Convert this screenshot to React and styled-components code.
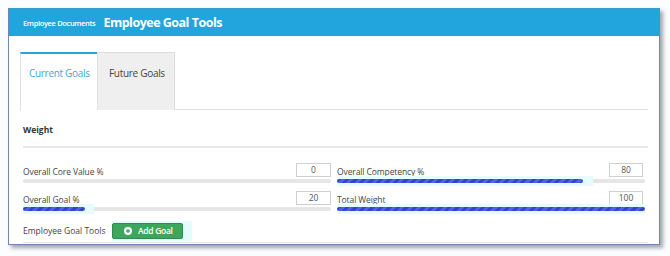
import React from "react";
import styled, { createGlobalStyle } from "styled-components";

const Global = createGlobalStyle`
  html, body { margin: 0; padding: 0; background: #ffffff; }
  body { font-family: "Open Sans", "Noto Sans", sans-serif; }
  * { box-sizing: border-box; }
`;

const Page = styled.div`
  width: 670px;
  height: 256px;
  padding: 8px 0 0 8px;
  background: #fbfdfe;
`;

const Window = styled.div`
  width: 652px;
  height: 237px;
  background: #fff;
  border: 1px solid #7484b0;
  border-top-color: #3e9cc8;
  box-shadow: 3px 3px 4px rgba(50, 55, 80, 0.45);
  display: flex;
  flex-direction: column;
`;

const Header = styled.div`
  height: 27px;
  background: #22a5dc;
  display: flex;
  align-items: center;
  padding-left: 14px;
  gap: 8px;
  color: #fff;
`;

const Crumb = styled.span`
  font-size: 7.5px;
  letter-spacing: -0.35px;
  font-weight: 600;
`;

const Title = styled.span`
  font-size: 12.5px;
  font-weight: 700;
  letter-spacing: -0.5px;
`;

const Body = styled.div`
  padding: 16px 11px 0 11px;
  display: flex;
  flex-direction: column;
`;

const TabBar = styled.div`
  display: flex;
  height: 58px;
  border-bottom: 1px solid #e2e2e2;
`;

const Tab = styled.div`
  width: ${(p) => p.$w}px;
  padding-left: ${(p) => p.$pl}px;
  font-size: 10px;
  letter-spacing: -0.3px;
  color: ${(p) => (p.$active ? "#44a6d4" : "#444")};
  background: ${(p) => (p.$active ? "#fff" : "#efefef")};
  border-top: ${(p) => (p.$active ? "2px solid #22a5dc" : "1px solid #dcdcdc")};
  border-left: 1px solid #e2e2e2;
  border-right: ${(p) => (p.$active ? "none" : "1px solid #dcdcdc")};
  margin-bottom: ${(p) => (p.$active ? "-1px" : "0")};
  height: ${(p) => (p.$active ? "59px" : "58px")};
  line-height: 14px;
  padding-top: ${(p) => (p.$active ? "12px" : "13px")};
`;

const Content = styled.div`
  margin-left: 3px;
  display: flex;
  flex-direction: column;
`;

const SectionTitle = styled.div`
  font-size: 8.5px;
  font-weight: 700;
  color: #333;
  height: 38px;
  padding-top: 14px;
  line-height: 12px;
  border-bottom: 2px solid #eaeaea;
`;

const Grid = styled.div`
  display: grid;
  grid-template-columns: 308px 308px;
  column-gap: 6px;
  padding-top: 15px;
`;

const Field = styled.div`
  display: flex;
  flex-direction: column;
  height: 28px;
`;

const FieldTop = styled.div`
  display: flex;
  justify-content: space-between;
  align-items: center;
  height: 14px;
`;

const Label = styled.span`
  font-size: 8.5px;
  color: #444;
  letter-spacing: -0.1px;
  padding-top: 3px;
`;

const ValueBox = styled.div`
  width: ${(p) => p.$w}px;
  margin-right: ${(p) => p.$mr}px;
  height: 14px;
  border: 1px solid #cfcfcf;
  font-size: 8.5px;
  color: #555;
  text-align: center;
  line-height: 12px;
  background: #fff;
`;

const Track = styled.div`
  margin-top: 2px;
  height: 4px;
  background: #e6e6e6;
  border-radius: 2px;
  position: relative;
`;

const Glow = styled.div`
  position: absolute;
  left: 0;
  top: -3px;
  height: 10px;
  background: #e6fbfd;
`;

const Fill = styled.div`
  position: absolute;
  left: 0;
  top: 0;
  height: 4px;
  border-radius: 2px;
  background: repeating-linear-gradient(
    135deg,
    #3444d2 0 3px,
    #5062e0 3px 6px
  );
`;

const ToolRow = styled.div`
  display: flex;
  align-items: center;
  height: 22px;
  margin-top: 2px;
  border-bottom: 1px solid #e6e6e6;
  padding-bottom: 2px;
`;

const ToolLabel = styled.span`
  font-size: 8.5px;
  color: #444;
  width: 89px;
`;

const ButtonGlow = styled.div`
  background: #e4fcfe;
  padding: 2px 9px 2px 0;
`;

const Button = styled.button`
  display: flex;
  align-items: center;
  gap: 6px;
  height: 16px;
  width: 71px;
  padding: 0 0 0 11px;
  background: #3ba65c;
  border: 1px solid #2f8a4b;
  border-radius: 2px;
  color: #fff;
  font-family: "Open Sans", sans-serif;
  font-size: 8.5px;
  font-weight: 600;
  letter-spacing: -0.3px;
`;

const Bar = ({ pct }) => (
  <Track>
    {pct > 0 && <Glow style={{ width: `${Math.min(100, pct + 3)}%` }} />}
    {pct > 0 && <Fill style={{ width: `${pct}%` }} />}
  </Track>
);

const fields = [
  { label: "Overall Core Value %", value: "0", pct: 0 },
  { label: "Overall Competency %", value: "80", pct: 80 },
  { label: "Overall Goal %", value: "20", pct: 20 },
  { label: "Total Weight", value: "100", pct: 100 },
];

export default function App() {
  return (
    <>
      <Global />
      <Page>
        <Window>
          <Header>
            <Crumb>Employee Documents</Crumb>
            <Title>Employee Goal Tools</Title>
          </Header>
          <Body>
            <TabBar>
              <Tab $active $w={77} $pl={8}>Current Goals</Tab>
              <Tab $w={78} $pl={11}>Future Goals</Tab>
            </TabBar>
            <Content>
              <SectionTitle>Weight</SectionTitle>
              <Grid>
                {fields.map((f, i) => (
                  <Field key={f.label}>
                    <FieldTop>
                      <Label>{f.label}</Label>
                      <ValueBox $w={i % 2 ? 34 : 35} $mr={i % 2 ? 2 : 0}>
                        {f.value}
                      </ValueBox>
                    </FieldTop>
                    <Bar pct={f.pct} />
                  </Field>
                ))}
              </Grid>
              <ToolRow>
                <ToolLabel>Employee Goal Tools</ToolLabel>
                <ButtonGlow>
                  <Button>
                    <svg width="8" height="8" viewBox="0 0 8 8">
                      <circle cx="4" cy="4" r="4" fill="#fff" />
                      <path d="M4 2v4M2 4h4" stroke="#3ba65c" strokeWidth="1.3" />
                    </svg>
                    Add Goal
                  </Button>
                </ButtonGlow>
              </ToolRow>
            </Content>
          </Body>
        </Window>
      </Page>
    </>
  );
}
